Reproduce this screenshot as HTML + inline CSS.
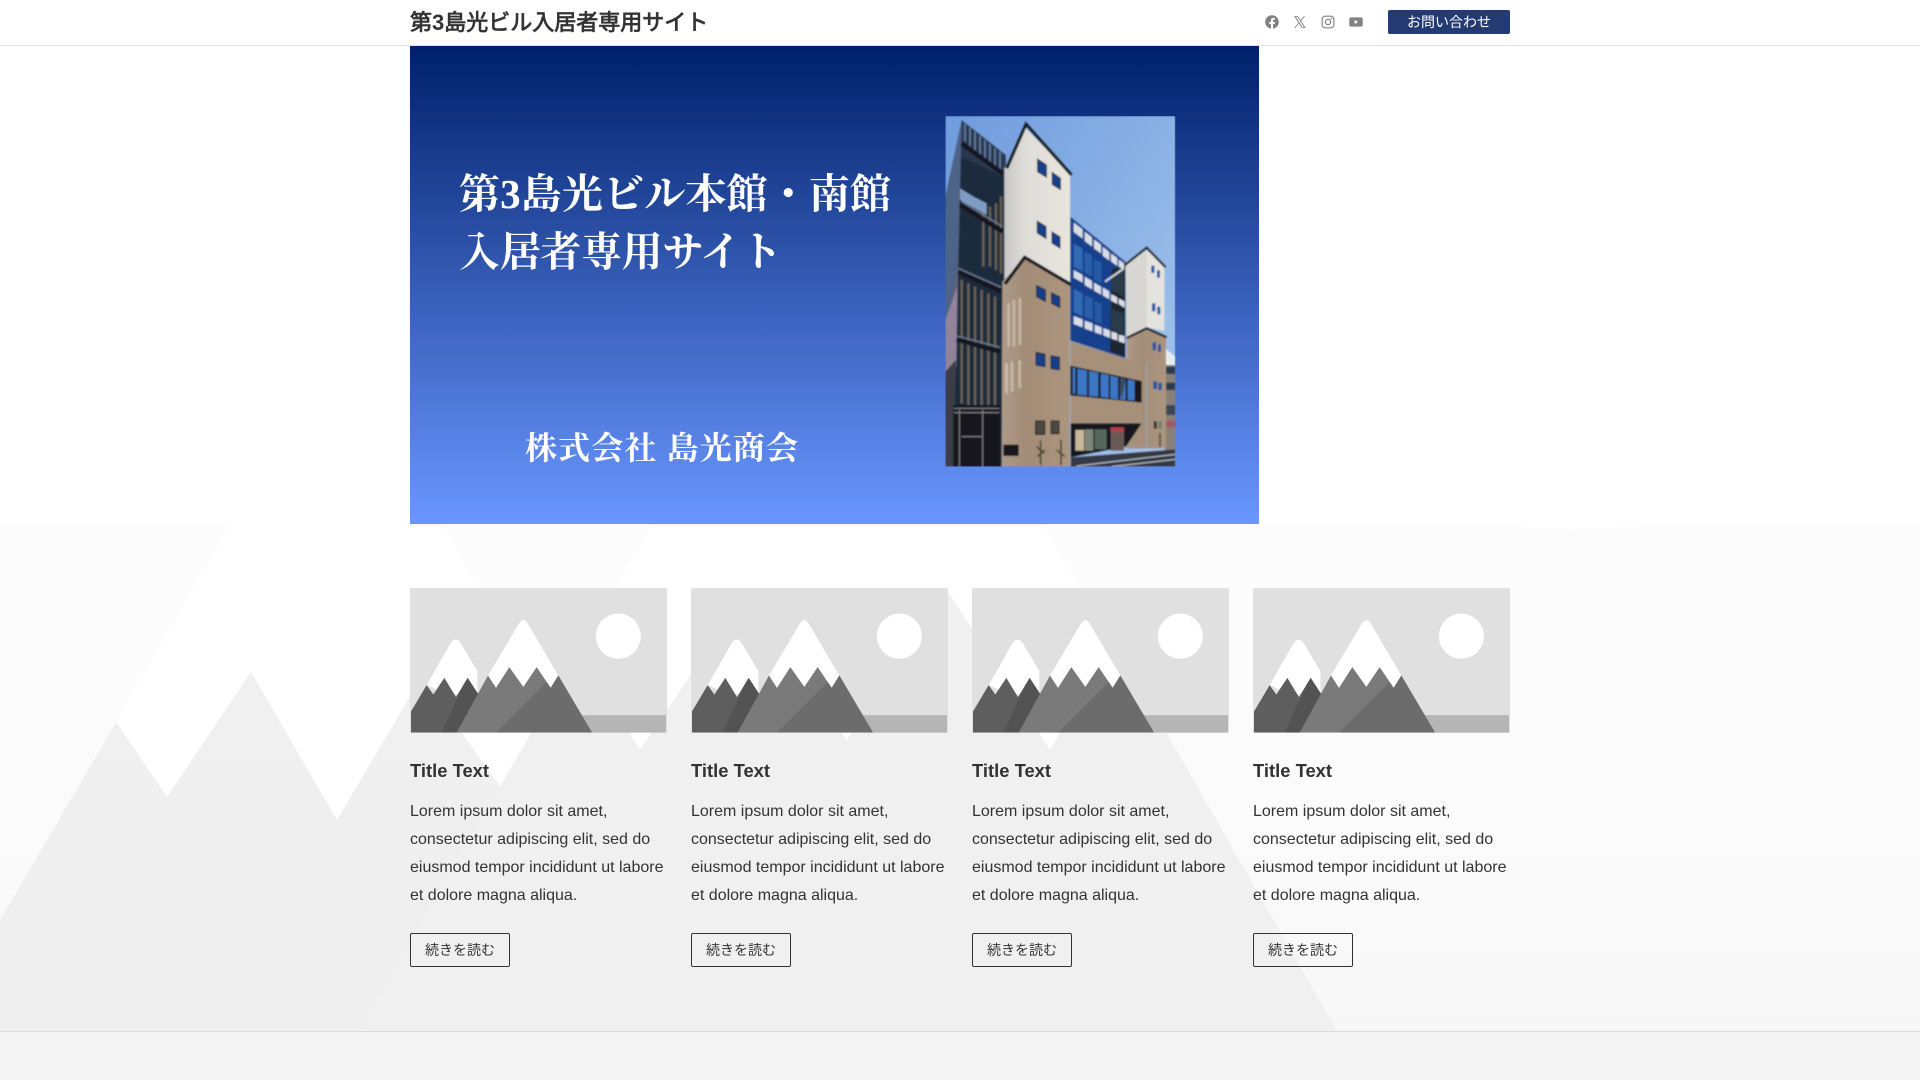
<!DOCTYPE html>
<html lang="ja">
<head>
<meta charset="utf-8">
<title>第3島光ビル入居者専用サイト</title>
<style>
html,body{margin:0;padding:0;width:1920px;height:1080px;overflow:hidden;background:#fff}
body{position:relative;font-family:"Liberation Sans","WenQuanYi Zen Hei",sans-serif;color:#333}
.abs{position:absolute}
#bg{position:absolute;left:0;top:0;width:1920px;height:1080px}
#hdr{position:absolute;left:0;top:0;width:1920px;height:45px;background:#fff;border-bottom:1px solid #e4e4e4}
#logo{position:absolute;left:410px;top:8px;font-size:22px;font-weight:700;line-height:29px;color:#333;white-space:nowrap}
#cta{position:absolute;left:1388px;top:10px;width:122px;height:24px;background:#233a72;border-radius:2px;color:#fff;font-size:14px;line-height:24px;text-align:center}
.ic{position:absolute;top:15px;width:14px;height:14px;fill:#828282}
#hero{position:absolute;left:410px;top:46px;width:849px;height:478px}
.card{position:absolute;top:588px;width:257px}
.card svg{display:block;width:257px;height:145px}
.card h3{position:absolute;left:0;top:172px;margin:0;font-size:18.4px;line-height:22px;font-weight:700;color:#333;white-space:nowrap}
.card p{position:absolute;left:0;top:210px;margin:0;width:257px;font-size:16px;line-height:28px;color:#333;white-space:nowrap}
.card a{position:absolute;left:0;top:345px;box-sizing:border-box;width:100px;height:34px;border:1px solid #333;border-radius:2px;font-size:14px;line-height:32px;text-align:center;color:#333}
#foot{position:absolute;left:0;top:1031px;width:1920px;height:49px;background:#f5f5f5;border-top:1px solid #dcdcdc;box-sizing:border-box}
</style>
</head>
<body>
<svg id="bg" viewBox="0 0 1920 1080" xmlns="http://www.w3.org/2000/svg">
  <defs>
    <linearGradient id="b0" x1="0" y1="524" x2="0" y2="1031" gradientUnits="userSpaceOnUse">
      <stop offset="0" stop-color="#fcfcfc"/><stop offset=".6" stop-color="#fbfbfb"/><stop offset="1" stop-color="#f7f7f7"/>
    </linearGradient>
    <linearGradient id="b1" x1="0" y1="640" x2="0" y2="1031" gradientUnits="userSpaceOnUse">
      <stop offset="0" stop-color="#f0f0f0"/><stop offset="1" stop-color="#eeeeee"/>
    </linearGradient>
  </defs>
  <rect x="0" y="524" width="1920" height="507" fill="url(#b0)"/>
  <polygon fill="#ffffff" points="230,524 442,524 547,706 652,524 1043,524 1337,1031 0,1031 0,920"/>
  <polygon fill="#ffffff" points="1487,524 1569,530 1675,524"/>
  <polygon fill="url(#b1)" points="0,920 116,722 167,797 251,672 337,820 422,676 500,787 358,1031 0,1031"/>
  <polygon fill="#f0f0f0" points="358,1031 580,649 640,750 745,595 847,740 947,590 1050,750 1114,641 1337,1031"/>
</svg>

<div id="hdr"></div>
<div id="logo">第3島光ビル入居者専用サイト</div>

<svg class="ic" style="left:1265px" viewBox="0 0 512 512"><path d="M504 256C504 119 393 8 256 8S8 119 8 256c0 123.800 90.700 226.400 209.300 245V327.700h-63V256h63v-54.600c0-62.200 37-96.500 93.700-96.500 27.100 0 55.500 4.800 55.500 4.800v61h-31.300c-30.800 0-40.400 19.100-40.400 38.700V256h68.800l-11 71.700h-57.800V501C413.300 482.400 504 379.800 504 256z"/></svg>
<svg class="ic" style="left:1293px" viewBox="0 0 24 24"><path d="M2 2h6.400l4.800 6.800L18.800 2h1.800l-6.600 8 7.600 12h-6.400l-5.100-7.400L4 22H2.100l7.200-8.700zM5.100 3.500l10.900 17h2.700L7.800 3.500z"/></svg>
<svg class="ic" style="left:1321px" viewBox="0 0 24 24"><path fill-rule="evenodd" d="M7 1h10a6 6 0 0 1 6 6v10a6 6 0 0 1-6 6H7a6 6 0 0 1-6-6V7a6 6 0 0 1 6-6zm0 2a4 4 0 0 0-4 4v10a4 4 0 0 0 4 4h10a4 4 0 0 0 4-4V7a4 4 0 0 0-4-4zm5 3.500a5.500 5.500 0 1 1 0 11 5.500 5.500 0 0 1 0-11zm0 2a3.500 3.500 0 1 0 0 7 3.500 3.500 0 0 0 0-7zM17.800 4.800a1.400 1.400 0 1 1 0 2.800 1.400 1.400 0 0 1 0-2.800z"/></svg>
<svg class="ic" style="left:1349px" viewBox="0 0 24 24"><path fill-rule="evenodd" d="M4 4h16a3.500 3.500 0 0 1 3.500 3.500v9A3.500 3.500 0 0 1 20 20H4a3.500 3.500 0 0 1-3.500-3.500v-9A3.500 3.500 0 0 1 4 4zm5.700 4.600v6.800l6-3.400z"/></svg>
<div id="cta">お問い合わせ</div>

<svg id="hero" viewBox="410 46 849 478" xmlns="http://www.w3.org/2000/svg">
  <defs>
    <linearGradient id="h" x1="0" y1="46" x2="0" y2="524" gradientUnits="userSpaceOnUse">
      <stop offset="0" stop-color="#00206a"/><stop offset="1" stop-color="#6a97ff"/>
    </linearGradient>
    <linearGradient id="sky" x1="0" y1="0" x2="1" y2="1">
      <stop offset="0" stop-color="#6f9cde"/><stop offset="1" stop-color="#a6c6ec"/>
    </linearGradient>
    <linearGradient id="wh" x1="0" y1="0" x2="1" y2="0">
      <stop offset="0" stop-color="#c6c6c6"/><stop offset=".3" stop-color="#dedcd8"/><stop offset="1" stop-color="#e8e5dc"/>
    </linearGradient>
    <linearGradient id="tan" x1="0" y1="0" x2="1" y2="0">
      <stop offset="0" stop-color="#ad9a88"/><stop offset=".35" stop-color="#a28c76"/><stop offset="1" stop-color="#ab957f"/>
    </linearGradient>
    <clipPath id="bx"><rect x="76" y="48" width="690" height="1052"/></clipPath>
    <filter id="s" x="-2%" y="-2%" width="104%" height="104%"><feGaussianBlur stdDeviation="2.600"/></filter>
    <filter id="t" x="-2%" y="-10%" width="104%" height="120%"><feGaussianBlur stdDeviation=".35"/></filter>
  </defs>
  <rect x="410" y="46" width="849" height="478" fill="url(#h)"/>

  <g fill="#ffffff" font-family="'Liberation Serif','Noto Serif CJK JP',serif" font-weight="700" filter="url(#t)">
    <text x="459" y="208" font-size="41" textLength="432" lengthAdjust="spacing">第3島光ビル本館・南館</text>
    <text x="459" y="266" font-size="41" textLength="323" lengthAdjust="spacing">入居者専用サイト</text>
    <text x="525" y="459" font-size="32" textLength="273" lengthAdjust="spacing">株式会社 島光商会</text>
  </g>

  <g transform="translate(920,100) scale(.33333)">
    <g clip-path="url(#bx)"><g filter="url(#s)">
      <rect x="76" y="48" width="690" height="1052" fill="url(#sky)"/>
      <!-- distant building -->
      <polygon fill="#e8edf4" points="735,745 766,770 766,800 735,800"/>
      <rect x="735" y="795" width="31" height="260" fill="#8a7f78"/>
      <rect x="737" y="800" width="29" height="22" fill="#2c3a50"/>
      <rect x="737" y="848" width="29" height="22" fill="#2c3a50"/>
      <rect x="737" y="915" width="29" height="30" fill="#3a4658"/>
      <rect x="737" y="962" width="29" height="20" fill="#a05a60"/>
      <!-- stair block -->
      <polygon fill="#2a3950" points="76,290 125,60 258,165 258,240 125,180"/>
      <polygon fill="#1f2a3c" points="76,290 125,170 258,235 258,1100 76,1100"/>
      <polygon fill="#4d6488" points="76,290 125,62 115,480 76,700"/>
      <polygon fill="#5e6280" points="76,700 115,480 110,800 76,820"/>
      <polygon fill="#93839a" points="76,660 112,560 108,780 76,815"/>
      <polygon fill="#3a3d48" points="76,815 108,780 100,1100 76,1100"/>
      <g stroke="#7f9ac8" stroke-width="4" opacity=".8">
        <path d="M135 70V125M150 82V138M165 95V150M180 108V163M195 120V175M210 132V187M225 145V200M240 155V210"/>
      </g>
      <g stroke="#84755f" stroke-width="7" opacity=".75">
        <path d="M125 540V910M145 550V915M165 560V915M185 570V915M205 580V920M225 590V920"/>
        <path d="M190 330V500M210 320V500M228 310V510M243 290V520"/>
      </g>
      <g fill="none" stroke="#121923" stroke-width="14">
        <path d="M125 130L250 222"/>
        <path d="M120 315L248 395"/>
        <path d="M115 515L244 575"/>
        <path d="M110 718L240 755"/>
      </g>
      <g fill="none" stroke="#6c7c92" stroke-width="4">
        <path d="M125 305L248 380"/><path d="M115 505L244 562"/><path d="M110 708L240 742"/>
      </g>
      <polygon fill="#7f9cc4" points="120,265 160,290 200,310 200,345 120,300"/>
      <rect x="100" y="915" width="140" height="185" fill="#12161c"/>
      <g stroke="#8e8e8e" stroke-width="3"><path d="M102 925H238M102 938H238M118 930V1100M188 930V1100M125 1010H185"/></g>
      <!-- main tower upper -->
      <polygon fill="url(#wh)" points="253,205 318,85 450,220 450,545 315,475 253,540"/>
      <path d="M260 205L318 72L455 225" fill="none" stroke="#191a20" stroke-width="10"/>
      <!-- main tower lower -->
      <polygon fill="url(#tan)" points="247,545 315,478 450,555 450,1100 245,1100"/>
      <g fill="#d8cdba" opacity=".65">
        <rect x="262" y="610" width="8" height="130"/><rect x="278" y="600" width="8" height="140"/><rect x="296" y="595" width="8" height="140"/>
        <rect x="255" y="790" width="9" height="90"/><rect x="272" y="785" width="8" height="90"/><rect x="295" y="780" width="8" height="85"/>
      </g>
      <path d="M255 552L314 472L456 556" fill="none" stroke="#15151c" stroke-width="10"/>
      <!-- main tower windows -->
      <g fill="#17408c" stroke="#101522" stroke-width="3">
        <polygon points="353,178 379,195 379,231 353,215"/>
        <polygon points="397,218 421,235 421,268 397,253"/>
        <polygon points="352,364 378,380 378,415 352,399"/>
        <polygon points="396,396 420,411 420,444 396,429"/>
        <polygon points="350,557 376,570 376,604 350,590"/>
        <polygon points="395,579 419,591 419,622 395,610"/>
        <polygon points="348,757 375,763 375,800 348,795"/>
        <polygon points="393,768 418,772 418,809 393,806"/>
      </g>
      <g fill="#4e4a42" stroke="#101010" stroke-width="3">
        <rect x="347" y="963" width="27" height="40"/><rect x="393" y="963" width="24" height="38"/>
      </g>
      <!-- glass middle -->
      <polygon fill="#123f8c" points="451,350 616,485 616,775 451,722"/>
      <polygon fill="#1f2730" points="575,510 616,490 616,770 570,755"/>
      <g fill="#d8dde6">
        <polygon points="461,368 488,388 488,416 461,396"/>
        <polygon points="494,395 516,412 516,440 494,423"/>
        <polygon points="522,418 543,434 543,460 522,445"/>
        <polygon points="548,440 568,456 568,482 548,467"/>
        <polygon points="573,460 592,474 592,498 573,484"/>
        <polygon points="596,478 612,490 612,510 596,500"/>
        <polygon points="461,510 488,525 488,548 461,533"/>
        <polygon points="494,530 516,543 516,568 494,555"/>
        <polygon points="522,548 543,560 543,584 522,572"/>
        <polygon points="548,562 568,574 568,598 548,586"/>
        <polygon points="573,582 592,592 592,612 573,602"/>
        <polygon points="596,595 614,604 614,624 596,612"/>
        <polygon points="461,648 488,658 488,682 461,672"/>
        <polygon points="494,662 518,670 518,694 494,686"/>
        <polygon points="524,674 545,682 545,704 524,697"/>
        <polygon points="550,684 570,692 570,714 550,706"/>
        <polygon points="574,694 592,700 592,722 574,716"/>
        <polygon points="596,704 614,708 614,730 596,724"/>
      </g>
      <polygon fill="#3269b2" points="461,430 488,446 488,515 461,500"/>
      <polygon fill="#2a5ea8" points="494,454 516,466 516,530 494,518"/>
      <polygon fill="#285aa4" points="522,476 545,488 545,550 522,540"/>
      <polygon fill="#3269b2" points="461,566 488,580 488,650 461,636"/>
      <polygon fill="#2a5ea8" points="494,586 518,596 518,660 494,650"/>
      <polygon fill="#285aa4" points="524,602 545,612 545,672 524,664"/>
      <polygon fill="#2a3a48" points="574,530 612,510 612,590 574,572"/>
      <polygon fill="#2a3a48" points="574,626 612,640 612,704 574,690"/>
      <path d="M555 545L612 505" fill="none" stroke="#cfd3d8" stroke-width="6"/>
      <!-- right tower -->
      <polygon fill="#d8d6d2" points="617,495 680,450 733,498 733,692 680,682 620,712"/>
      <polygon fill="#e4e3de" points="680,450 733,498 733,692 680,682"/>
      <path d="M615 495L680 443L737 502" fill="none" stroke="#1f1f26" stroke-width="7"/>
      <polygon fill="url(#tan)" points="620,715 680,690 738,712 738,1045 620,1045"/>
      <path d="M620 714L680 685L740 712" fill="none" stroke="#15151c" stroke-width="7"/>
      <g fill="#1f55a4">
        <rect x="694" y="497" width="9" height="22"/><rect x="711" y="511" width="9" height="22"/>
        <rect x="696" y="610" width="10" height="24"/><rect x="712" y="620" width="9" height="23"/>
        <rect x="698" y="727" width="10" height="24"/><rect x="714" y="733" width="9" height="23"/>
        <rect x="700" y="844" width="11" height="23"/><rect x="715" y="848" width="10" height="22"/>
      </g>
      <rect x="701" y="964" width="10" height="22" fill="#3a3a36"/><rect x="716" y="964" width="9" height="22" fill="#6a7a70"/>
      <rect x="677" y="785" width="6" height="260" fill="#9b9ea2"/>
      <!-- middle lower -->
      <polygon fill="#a6907a" points="452,724 665,790 665,975 452,970"/>
      <polygon fill="#14171d" points="451,797 665,843 665,908 451,886"/>
      <g fill="#3c76c4">
        <polygon points="458,802 466,803 466,882 458,881"/>
        <polygon points="472,806 501,811 501,887 472,884"/>
        <polygon points="507,813 535,818 535,890 507,888"/>
        <polygon points="542,820 566,825 566,894 542,891"/>
        <polygon points="571,827 594,832 594,898 571,895"/>
        <polygon points="600,834 617,837 617,900 600,898"/>
        <polygon points="623,838 644,842 644,902 623,900"/>
      </g>
      <polygon fill="#3a4658" points="600,836 617,838 605,895 598,880"/>
      <!-- ground -->
      <polygon fill="#15181d" points="452,970 665,970 618,1040 452,1072"/>
      <polygon fill="#a6907a" points="665,970 677,970 677,1045 618,1045"/>
      <rect x="466" y="990" width="26" height="62" fill="#c8b898"/>
      <rect x="494" y="988" width="26" height="64" fill="#7f8878"/>
      <rect x="524" y="988" width="36" height="60" fill="#56685c"/>
      <rect x="572" y="982" width="40" height="70" fill="#6a5a56"/>
      <rect x="572" y="982" width="40" height="14" fill="#b04050"/>
      <!-- street -->
      <polygon fill="#343945" points="452,1072 766,1048 766,1100 452,1100"/>
      <path d="M470 1098L766 1063M575 1100L766 1078" fill="none" stroke="#c8ccd2" stroke-width="3"/>
      <rect x="250" y="1034" width="46" height="34" fill="#17181c"/>
      <g stroke="#4a4a36" stroke-width="5" fill="none">
        <path d="M362 1022V1095M350 1040L372 1060M352 1070L375 1050"/>
        <path d="M423 1020V1095M410 1050L435 1070"/>
        <path d="M720 1000V1040"/>
      </g>
    </g></g>
  </g>
</svg>

<svg width="0" height="0" style="position:absolute">
  <defs>
    <symbol id="ph" viewBox="30 54 771 434">
      <rect x="30" y="54" width="771" height="434" fill="#e0e0e0"/>
      <circle cx="655" cy="198" r="67.500" fill="#ffffff"/>
      <rect x="33" y="435" width="765" height="52" fill="#b5b5b5"/>
      <path d="M80 345L150 222Q167 195 184 222L232 303L232 372L140 372Z" fill="#ffffff"/>
      <polygon fill="#5e5e5e" points="33,424 80,345 100,373 133,323 168,381 203,323 240,380 175,487 33,487"/>
      <polygon fill="#535353" points="125,487 190,345 203,323 240,380 175,487"/>
      <path d="M264 316L354 165Q370 135 386 165L475 316L452 370L288 370Z" fill="#ffffff"/>
      <polygon fill="#7a7a7a" points="170,487 264,316 288,353 328,291 370,350 410,291 452,353 475,316 576,487"/>
      <polygon fill="#6c6c6c" points="288,487 440,335 452,353 475,316 576,487"/>
    </symbol>
  </defs>
</svg>

<div class="card" style="left:410px"><svg><use href="#ph"/></svg><h3>Title Text</h3><p>Lorem ipsum dolor sit amet,<br>consectetur adipiscing elit, sed do<br>eiusmod tempor incididunt ut labore<br>et dolore magna aliqua.</p><a>続きを読む</a></div>
<div class="card" style="left:691px"><svg><use href="#ph"/></svg><h3>Title Text</h3><p>Lorem ipsum dolor sit amet,<br>consectetur adipiscing elit, sed do<br>eiusmod tempor incididunt ut labore<br>et dolore magna aliqua.</p><a>続きを読む</a></div>
<div class="card" style="left:972px"><svg><use href="#ph"/></svg><h3>Title Text</h3><p>Lorem ipsum dolor sit amet,<br>consectetur adipiscing elit, sed do<br>eiusmod tempor incididunt ut labore<br>et dolore magna aliqua.</p><a>続きを読む</a></div>
<div class="card" style="left:1253px"><svg><use href="#ph"/></svg><h3>Title Text</h3><p>Lorem ipsum dolor sit amet,<br>consectetur adipiscing elit, sed do<br>eiusmod tempor incididunt ut labore<br>et dolore magna aliqua.</p><a>続きを読む</a></div>

<div id="foot"></div>
</body>
</html>
